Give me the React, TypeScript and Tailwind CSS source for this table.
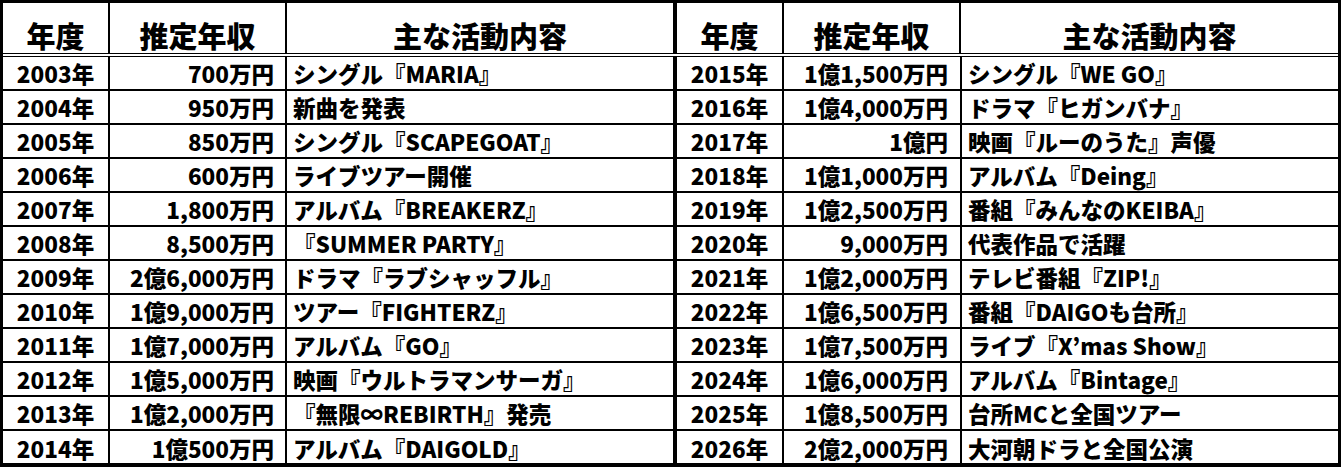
const left: [string, string, string][] = [
  ["2003年", "700万円", "シングル『MARIA』"],
  ["2004年", "950万円", "新曲を発表"],
  ["2005年", "850万円", "シングル『SCAPEGOAT』"],
  ["2006年", "600万円", "ライブツアー開催"],
  ["2007年", "1,800万円", "アルバム『BREAKERZ』"],
  ["2008年", "8,500万円", "『SUMMER PARTY』"],
  ["2009年", "2億6,000万円", "ドラマ『ラブシャッフル』"],
  ["2010年", "1億9,000万円", "ツアー『FIGHTERZ』"],
  ["2011年", "1億7,000万円", "アルバム『GO』"],
  ["2012年", "1億5,000万円", "映画『ウルトラマンサーガ』"],
  ["2013年", "1億2,000万円", "『無限∞REBIRTH』発売"],
  ["2014年", "1億500万円", "アルバム『DAIGOLD』"],
];

const right: [string, string, string][] = [
  ["2015年", "1億1,500万円", "シングル『WE GO』"],
  ["2016年", "1億4,000万円", "ドラマ『ヒガンバナ』"],
  ["2017年", "1億円", "映画『ルーのうた』声優"],
  ["2018年", "1億1,000万円", "アルバム『Deing』"],
  ["2019年", "1億2,500万円", "番組『みんなのKEIBA』"],
  ["2020年", "9,000万円", "代表作品で活躍"],
  ["2021年", "1億2,000万円", "テレビ番組『ZIP!』"],
  ["2022年", "1億6,500万円", "番組『DAIGOも台所』"],
  ["2023年", "1億7,500万円", "ライブ『X’mas Show』"],
  ["2024年", "1億6,000万円", "アルバム『Bintage』"],
  ["2025年", "1億8,500万円", "台所MCと全国ツアー"],
  ["2026年", "2億2,000万円", "大河朝ドラと全国公演"],
];

const font = { fontFamily: '"Noto Sans CJK JP", "Noto Sans", sans-serif' };

// column widths incl. right border
const HeaderCells = ({ wide }: { wide: string }) => (
  <>
    <div className="w-[107px] shrink-0 border-r-2 border-black flex items-end justify-center pb-[3px]">年度</div>
    <div className="w-[177px] shrink-0 border-r-2 border-black flex items-end justify-center pb-[3px]">推定年収</div>
    <div className={`${wide} flex items-end justify-center pb-[3px]`}>主な活動内容</div>
  </>
);

export default function App() {
  return (
    <div
      className="w-[1341px] h-[467px] bg-white text-black border-t-[3px] border-x-[3px] border-b-4 border-black flex flex-col font-black"
      style={font}
    >
      <div className="h-[54px] shrink-0 flex border-b-4 border-double border-black text-[29px] leading-none">
        <HeaderCells wide="w-[390px] shrink-0 border-r-4 border-black" />
        <HeaderCells wide="flex-1" />
      </div>
      {left.map((row, i) => {
        const r = right[i];
        const last = i === left.length - 1;
        return (
          <div
            key={row[0]}
            className={`h-[34px] shrink-0 flex text-[22.5px] leading-none ${last ? "" : "border-b-2 border-black"}`}
          >
            <div className="w-[107px] shrink-0 border-r-2 border-black flex items-center justify-center">{row[0]}</div>
            <div className="w-[177px] shrink-0 border-r-2 border-black flex items-center justify-end pr-[11px]">{row[1]}</div>
            <div className="w-[390px] shrink-0 border-r-4 border-black flex items-center pl-[6px] whitespace-nowrap">{row[2]}</div>
            <div className="w-[107px] shrink-0 border-r-2 border-black flex items-center justify-center">{r[0]}</div>
            <div className="w-[178px] shrink-0 border-r-2 border-black flex items-center justify-end pr-[12px]">{r[1]}</div>
            <div className="flex-1 flex items-center pl-[6px] whitespace-nowrap">{r[2]}</div>
          </div>
        );
      })}
    </div>
  );
}
